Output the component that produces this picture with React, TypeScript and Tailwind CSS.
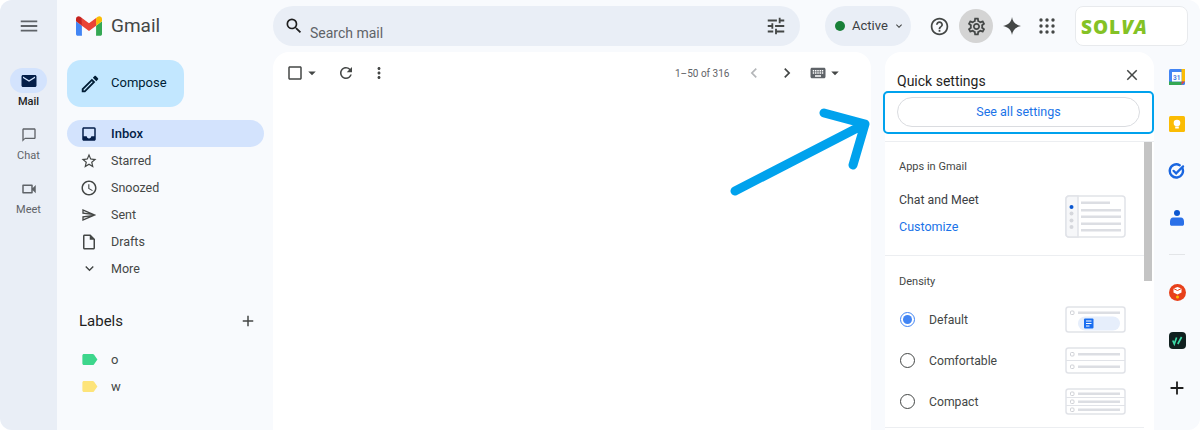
import React from "react";
import {
  MdAdd,
  MdArrowDropDown,
  MdCheckBoxOutlineBlank,
  MdChevronLeft,
  MdChevronRight,
  MdClose,
  MdExpandMore,
  MdInbox,
  MdKeyboard,
  MdLabel,
  MdMail,
  MdMenu,
  MdMoreVert,
  MdOutlineAccessTime,
  MdOutlineChatBubbleOutline,
  MdOutlineCreate,
  MdOutlineHelpOutline,
  MdOutlineInsertDriveFile,
  MdOutlineSend,
  MdOutlineSettings,
  MdOutlineVideocam,
  MdRefresh,
  MdSearch,
  MdStarBorder,
  MdTune,
} from "react-icons/md";

type NavItem = {
  id: string;
  label: string;
  icon: React.ReactNode;
};

const NAV_ITEMS: Array<NavItem> = [
  { id: "starred", label: "Starred", icon: <MdStarBorder size={18} /> },
  { id: "snoozed", label: "Snoozed", icon: <MdOutlineAccessTime size={18} /> },
  { id: "sent", label: "Sent", icon: <MdOutlineSend size={16} /> },
  { id: "drafts", label: "Drafts", icon: <MdOutlineInsertDriveFile size={18} /> },
  { id: "more", label: "More", icon: <MdExpandMore size={17} /> },
];

const GmailLogo = () => (
  <svg width="26" height="20" viewBox="52 42 88 66">
    <path fill="#4285f4" d="M58 108h14V74L52 59v43c0 3.32 2.69 6 6 6" />
    <path fill="#34a853" d="M120 108h14c3.32 0 6-2.69 6-6V59l-20 15" />
    <path fill="#fbbc04" d="M120 48v26l20-15v-8c0-7.42-8.47-11.65-14.4-7.2" />
    <path fill="#ea4335" d="M72 74V48l24 18 24-18v26L96 92" />
    <path fill="#c5221f" d="M52 51v8l20 15V48l-5.6-4.2c-5.94-4.45-14.4-.22-14.4 7.2" />
  </svg>
);

const AppsGrid = () => (
  <svg width="16" height="16" viewBox="0 0 16 16" fill="#444746">
    {[2, 8, 14].map((y) =>
      [2, 8, 14].map((x) => <circle key={`${x}_${y}`} cx={x} cy={y} r="1.7" />)
    )}
  </svg>
);

const Sparkle = () => (
  <svg width="18" height="18" viewBox="0 0 18 18" fill="#444746">
    <path d="M9 0c.6 4.8 3.6 8 9 9-5.4 1-8.4 4.2-9 9-.6-4.8-3.6-8-9-9 5.4-1 8.4-4.2 9-9z" />
  </svg>
);

const CalendarIcon = () => (
  <svg width="16" height="16" viewBox="0 0 16 16">
    <rect width="16" height="16" rx="1.5" fill="#4285f4" />
    <rect x="12.5" y="0" width="3.5" height="12.5" fill="#fbbc04" />
    <rect x="0" y="12.5" width="12.5" height="3.5" fill="#34a853" />
    <path d="M12.5 12.5H16L12.5 16z" fill="#ea4335" />
    <rect x="3" y="3" width="9.5" height="9.5" fill="#fff" />
    <text
      x="7.75"
      y="10.6"
      textAnchor="middle"
      fontSize="6.5"
      fontWeight="700"
      fill="#4a7fe0"
      fontFamily="Roboto, sans-serif"
    >
      31
    </text>
  </svg>
);

const KeepIcon = () => (
  <svg width="16" height="16" viewBox="0 0 16 16">
    <rect width="16" height="16" rx="1.5" fill="#fbbc04" />
    <circle cx="8" cy="7" r="3.3" fill="#fff" />
    <rect x="6.2" y="10.5" width="3.6" height="2" fill="#fff" />
  </svg>
);

const TasksIcon = () => (
  <svg width="18" height="18" viewBox="0 0 18 18" fill="none" stroke="#1a66e0">
    <path d="M14.3 6a6.6 6.6 0 1 1-2.6-2.8" strokeWidth="2.4" strokeLinecap="round" />
    <path d="M5.5 8.8l2.6 2.6 7-7" strokeWidth="2.2" strokeLinecap="round" />
  </svg>
);

const ContactsIcon = () => (
  <svg width="14" height="16" viewBox="0 0 14 16">
    <circle cx="7" cy="3" r="3" fill="#0b57d0" />
    <path
      fill="#2a70e8"
      d="M3 7.5h8c1.5 0 3 1.5 3 4V14c0 1-.8 1.8-1.8 1.8H1.8C.8 15.8 0 15 0 14v-2.5c0-2.5 1.5-4 3-4z"
    />
  </svg>
);

const RedAddon = () => (
  <svg width="17" height="17" viewBox="0 0 17 17">
    <circle cx="8.5" cy="8.5" r="8.5" fill="#e8401a" />
    <path d="M4.5 4.5l4-1.5 4 1.5v4l-4 2-4-2z" fill="#fff" />
    <path d="M4.5 4.5l4 2 4-2" stroke="#e8401a" fill="none" />
    <circle cx="8.5" cy="13" r="1.5" fill="#fbbc04" />
  </svg>
);

const DarkAddon = () => (
  <svg width="17" height="17" viewBox="0 0 17 17">
    <rect width="17" height="17" rx="4" fill="#10201f" />
    <path
      d="M3.8 8.5l1.5 3.5L7.6 5.5M8.8 12l3.8-7"
      stroke="#3ddba8"
      strokeWidth="1.7"
      fill="none"
    />
  </svg>
);

const ChatThumb = () => (
  <svg width="61" height="43" viewBox="0 0 61 43" fill="none">
    <rect x="1" y="1" width="59" height="41" rx="3" fill="#fff" stroke="#e1e3e8" strokeWidth="1.5" />
    <path d="M4 1h9v41H4a3 3 0 0 1-3-3V4a3 3 0 0 1 3-3z" fill="#f6f7f9" stroke="#e1e3e8" strokeWidth="1.5" />
    <circle cx="6.5" cy="12" r="2" fill="#0b57d0" />
    <circle cx="6.5" cy="18.5" r="2" fill="#d5d7dc" />
    <circle cx="6.5" cy="25.5" r="2" fill="#d5d7dc" />
    <circle cx="6.5" cy="32" r="2" fill="#d5d7dc" />
    <rect x="16" y="6.5" width="29" height="2.5" fill="#dcdee3" />
    <rect x="16" y="14" width="40" height="2.5" fill="#dcdee3" />
    <rect x="16" y="20.5" width="40" height="2.5" fill="#dcdee3" />
    <rect x="16" y="27.5" width="40" height="2.5" fill="#dcdee3" />
    <rect x="16" y="34" width="40" height="2.5" fill="#dcdee3" />
  </svg>
);

const DefaultThumb = () => (
  <svg width="61" height="27" viewBox="0 0 61 27" fill="none">
    <rect x="1" y="1" width="59" height="25" rx="2.5" fill="#fff" stroke="#e1e3e8" strokeWidth="1.5" />
    <rect x="5.5" y="5" width="3.5" height="3.5" rx="1" stroke="#cfd1d6" />
    <rect x="13" y="5.5" width="42" height="2.5" fill="#dcdee3" />
    <rect x="13" y="10.5" width="42" height="14" rx="7" fill="#e6eefb" />
    <rect x="19" y="12.5" width="9.5" height="10" rx="1" fill="#1a6ef0" />
    <path d="M21 15h5.5M21 17.5h5.5M21 20h3.5" stroke="#fff" />
  </svg>
);

const ComfortableThumb = () => (
  <svg width="61" height="27" viewBox="0 0 61 27" fill="none">
    <rect x="1" y="1" width="59" height="25" rx="2.5" fill="#fff" stroke="#e1e3e8" strokeWidth="1.5" />
    <path d="M1 13.5h59" stroke="#e1e3e8" />
    <rect x="5.5" y="5.5" width="3.5" height="3.5" rx="1" stroke="#cfd1d6" />
    <rect x="13" y="6" width="42" height="2.5" fill="#dcdee3" />
    <rect x="5.5" y="18" width="3.5" height="3.5" rx="1" stroke="#cfd1d6" />
    <rect x="13" y="18.5" width="42" height="2.5" fill="#dcdee3" />
  </svg>
);

const CompactThumb = () => (
  <svg width="61" height="27" viewBox="0 0 61 27" fill="none">
    <rect x="1" y="1" width="59" height="25" rx="2.5" fill="#fff" stroke="#e1e3e8" strokeWidth="1.5" />
    <path d="M1 9.5h59M1 17.5h59" stroke="#e1e3e8" />
    {[4, 12, 20].map((y) => (
      <g key={y}>
        <rect x="5.5" y={y} width="3.5" height="3.5" rx="1" stroke="#cfd1d6" />
        <rect x="13" y={y + 0.5} width="42" height="2.5" fill="#dcdee3" />
      </g>
    ))}
  </svg>
);

const Arrow = () => (
  <svg
    className="absolute left-[725px] top-[100px]"
    width="150"
    height="100"
    viewBox="725 100 150 100"
    fill="none"
  >
    <path
      d="M735 191L865 124M824 113L865 124L853 165"
      stroke="#00a2ed"
      strokeWidth="9"
      strokeLinecap="round"
      strokeLinejoin="round"
    />
  </svg>
);

const RailItem = ({
  icon,
  label,
  active,
}: {
  icon: React.ReactNode;
  label: string;
  active?: boolean;
}) => (
  <div className="flex flex-col items-center">
    <div
      className={`flex h-[25px] w-[37px] items-center justify-center rounded-full ${
        active ? "bg-[#d3e3fd] text-[#041e49]" : "text-[#5f6368]"
      }`}
    >
      {icon}
    </div>
    <span
      className={`mt-[1px] text-[11px] leading-[16px] ${
        active ? "font-medium text-[#1f1f1f]" : "text-[#5f6368]"
      }`}
    >
      {label}
    </span>
  </div>
);

const DensityRow = ({
  label,
  selected,
  thumb,
}: {
  label: string;
  selected?: boolean;
  thumb: React.ReactNode;
}) => (
  <div className="flex h-[27px] items-center justify-between pl-[15px] pr-[18px]">
    <div className="flex items-center">
      <span
        className={`flex h-[15px] w-[15px] items-center justify-center rounded-full border-[1.5px] ${
          selected ? "border-[#4285f4]" : "border-[#444746]"
        }`}
      >
        {selected && <span className="h-[9px] w-[9px] rounded-full bg-[#4285f4]" />}
      </span>
      <span className="ml-[14px] mt-[1px] text-[12.2px] text-[#444746]">{label}</span>
    </div>
    {thumb}
  </div>
);

const App: React.FC = () => {
  return (
    <div className="relative flex h-[430px] w-[1200px] overflow-hidden rounded-[12px] bg-[#f8fafd] font-['Roboto',sans-serif]">
      {/* left rail */}
      <div className="flex w-[57px] flex-col items-center bg-[#e9eef6] pt-[15px]">
        <MdMenu size={22} className="text-[#5f6368]" />
        <div className="mt-[31px] flex flex-col items-center gap-[12px]">
          <RailItem active label="Mail" icon={<MdMail size={18} />} />
          <RailItem label="Chat" icon={<MdOutlineChatBubbleOutline size={16} />} />
          <RailItem label="Meet" icon={<MdOutlineVideocam size={18} />} />
        </div>
      </div>

      <div className="flex min-w-0 flex-1 flex-col">
        {/* header */}
        <div className="flex h-[52px] items-center">
          <div className="flex w-[216px] items-center pl-[19px]">
            <GmailLogo />
            <span className="ml-[9px] mt-[1px] text-[19px] text-[#444746]">Gmail</span>
          </div>
          <div className="flex h-[40px] w-[527px] items-center rounded-[20px] bg-[#e9eef6] pl-[11px] pr-[13px]">
            <MdSearch size={20} className="mb-[1px] text-[#1f1f1f]" />
            <span className="ml-[6px] mt-[15px] text-[14px] text-[#5f6368]">Search mail</span>
            <MdTune size={22} className="ml-auto text-[#444746]" />
          </div>
          <div className="ml-[25px] flex h-[40px] w-[86px] items-center rounded-[20px] bg-[#e9eef6] pl-[10px]">
            <span className="h-[10px] w-[10px] rounded-full bg-[#188038]" />
            <span className="ml-[7px] text-[13px] text-[#3c4043]">Active</span>
            <MdExpandMore size={12} className="ml-[5px] text-[#444746]" />
          </div>
          <MdOutlineHelpOutline size={21} className="ml-[18px] text-[#444746]" />
          <div className="ml-[9px] flex h-[34px] w-[34px] items-center justify-center rounded-full bg-[#d4d4d4]">
            <MdOutlineSettings size={21} className="text-[#444746]" />
          </div>
          <div className="ml-[10px] flex">
            <Sparkle />
          </div>
          <div className="ml-[18px] flex">
            <AppsGrid />
          </div>
          <div className="ml-[20px] flex h-[40px] w-[113px] items-center rounded-[8px] border border-[#e8eaed] bg-white pl-[5px] pt-[2px]">
            <span className="text-[19px] font-extrabold leading-none tracking-[1px] text-[#84c225] font-['Open_Sans',sans-serif]">
              SOL<span className="italic">VA</span>
            </span>
          </div>
        </div>

        <div className="flex min-h-0 flex-1">
          {/* sidebar */}
          <div className="w-[216px] pl-[10px] pr-[9px] pt-[8px]">
            <div className="flex h-[47px] w-[117px] items-center rounded-[14px] bg-[#c2e7ff] pl-[12px] text-[#001d35]">
              <MdOutlineCreate size={22} />
              <span className="mb-[1px] ml-[10px] text-[13px]">Compose</span>
            </div>
            <div className="mt-[13px] flex h-[27px] items-center rounded-full bg-[#d3e3fd] pl-[13px] text-[#041e49]">
              <MdInbox size={18} />
              <span className="ml-[13px] text-[13px] font-medium">Inbox</span>
            </div>
            {NAV_ITEMS.map((item) => (
              <div key={item.id} className="flex h-[27px] items-center text-[#444746]">
                <div className="flex w-[44px] justify-center">{item.icon}</div>
                <span className="mt-[2px] text-[12.5px]">{item.label}</span>
              </div>
            ))}
            <div className="mt-[29px] flex h-[20px] items-center justify-between pl-[12px] pr-[7px]">
              <span className="text-[15px] text-[#1f1f1f]">Labels</span>
              <MdAdd size={18} className="text-[#444746]" />
            </div>
            <div className="mt-[15px] flex h-[27px] items-center">
              <div className="flex w-[44px] justify-center">
                <MdLabel size={19} className="text-[#3dd68c]" />
              </div>
              <span className="text-[13px] text-[#444746]">o</span>
            </div>
            <div className="flex h-[27px] items-center">
              <div className="flex w-[44px] justify-center">
                <MdLabel size={19} className="text-[#fde47a]" />
              </div>
              <span className="text-[13px] text-[#444746]">w</span>
            </div>
          </div>

          {/* message list */}
          <div className="w-[598px] rounded-t-[16px] bg-white">
            <div className="flex h-[42px] items-center pl-[13px] text-[#444746]">
              <MdCheckBoxOutlineBlank size={18} />
              <MdArrowDropDown size={18} className="ml-[-1px]" />
              <MdRefresh size={18} className="ml-[16px]" />
              <MdMoreVert size={18} className="ml-[15px]" />
              <span className="ml-[287px] text-[10px] text-[#5f6368]">1–50 of 316</span>
              <MdChevronLeft size={20} className="ml-[15px] text-[#b4b6b9]" />
              <MdChevronRight size={20} className="ml-[13px]" />
              <MdKeyboard size={18} className="ml-[12px] text-[#5f6368]" />
              <MdArrowDropDown size={18} className="ml-[-1px]" />
            </div>
          </div>

          {/* quick settings */}
          <div className="ml-[14px] w-[269px] rounded-t-[16px] bg-white">
            <div className="flex h-[39px] items-start justify-between pl-[12px] pr-[13px] pt-[13px]">
              <span className="mt-[6px] text-[14px] leading-[20px] text-[#1f1f1f]">Quick settings</span>
              <MdClose size={18} className="mt-[1px] text-[#444746]" />
            </div>
            <div className="ml-[-2px] h-[43px] w-[271px] rounded-[5px] border-2 border-[#00a2ed] px-[12px] pt-[4px]">
              <div className="flex h-[30px] items-center justify-center rounded-full border border-[#dadce0] text-[12.5px] text-[#1a73e8]">
                See all settings
              </div>
            </div>
            <div className="mt-[7px] flex border-t border-[#eceef1]">
              <div className="w-[259px]">
                <div className="h-[114px] border-b border-[#eceef1] pt-[17px]">
                  <div className="pl-[14px] text-[11px] leading-[16px] text-[#444746]">Apps in Gmail</div>
                  <div className="mt-[9px] flex items-start justify-between pl-[14px] pr-[18px]">
                    <div className="pt-[8px]">
                      <div className="text-[12.3px] leading-[16px] text-[#3c4043]">Chat and Meet</div>
                      <div className="mt-[11px] text-[12.5px] leading-[16px] text-[#1a73e8]">Customize</div>
                    </div>
                    <div className="mt-[11px]">
                      <ChatThumb />
                    </div>
                  </div>
                </div>
                <div className="pt-[18px]">
                  <div className="pl-[14px] text-[11px] leading-[16px] text-[#444746]">Density</div>
                  <div className="mt-[16px] flex flex-col gap-[14px] border-b border-[#eceef1] pb-[12px]">
                    <DensityRow selected label="Default" thumb={<DefaultThumb />} />
                    <DensityRow label="Comfortable" thumb={<ComfortableThumb />} />
                    <DensityRow label="Compact" thumb={<CompactThumb />} />
                  </div>
                </div>
              </div>
              <div className="h-[139px] w-[8px] bg-[#c4c4c4]" />
            </div>
          </div>

          {/* add-ons */}
          <div className="flex w-[46px] flex-col items-center pt-[17px]">
            <div className="flex h-[16px] items-center"><CalendarIcon /></div>
            <div className="mt-[31px] flex h-[16px] items-center"><KeepIcon /></div>
            <div className="mt-[31px] flex h-[16px] items-center"><TasksIcon /></div>
            <div className="mt-[31px] flex h-[16px] items-center"><ContactsIcon /></div>
            <div className="mt-[28px] h-px w-[16px] bg-[#e3e5e8]" />
            <div className="mt-[29px] flex h-[17px] items-center"><RedAddon /></div>
            <div className="mt-[31px] flex h-[17px] items-center"><DarkAddon /></div>
            <MdAdd size={22} className="mt-[28px] text-[#1f1f1f]" />
          </div>
        </div>
      </div>

      <Arrow />
    </div>
  );
};

export default App;
